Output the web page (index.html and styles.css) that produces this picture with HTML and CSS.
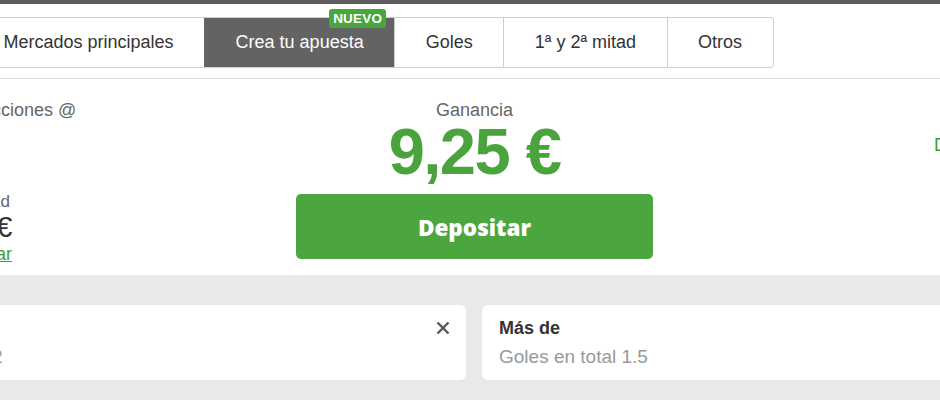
FILE: index.html
```html
<!DOCTYPE html>
<html lang="es">
<head>
<meta charset="utf-8">
<title>Crea tu apuesta</title>
<link rel="stylesheet" href="styles.css">
</head>
<body>
<div class="topbar"></div>
<nav class="tabs-wrap">
  <ul class="tabs">
    <li class="tab">Mercados principales</li>
    <li class="tab tab--active">Crea tu apuesta<span class="badge">NUEVO</span></li>
    <li class="tab">Goles</li>
    <li class="tab">1ª y 2ª mitad</li>
    <li class="tab">Otros</li>
  </ul>
</nav>
<section class="summary">
  <div class="summary__left">
    <div class="label">Selecciones @</div>
    <div class="label label--stake">Unidad</div>
    <div class="stake">10 €</div>
    <a class="link" href="#">Ajustar</a>
  </div>
  <div class="summary__center">
    <div class="label">Ganancia</div>
    <div class="payout">9,25 €</div>
    <button class="deposit" type="button">Depositar</button>
  </div>
  <div class="summary__right">
    <a class="details" href="#">Detalles</a>
  </div>
</section>
<section class="slips">
  <div class="slip">
    <div class="slip__head">
      <span class="slip__title">Real Madrid</span>
      <svg class="slip__close" width="14" height="14" viewBox="0 0 14 14" aria-hidden="true">
        <path d="M1.5 1.5 L12.5 12.5 M12.5 1.5 L1.5 12.5" stroke="#555" stroke-width="2.4" stroke-linecap="butt" fill="none"/>
      </svg>
    </div>
    <div class="slip__sub">Resultado del partido 1X2</div>
  </div>
  <div class="slip">
    <div class="slip__head">
      <span class="slip__title">Más de</span>
    </div>
    <div class="slip__sub">Goles en total 1.5</div>
  </div>
</section>
</body>
</html>
```
FILE: styles.css
```css
* { box-sizing: border-box; }
html, body { margin: 0; padding: 0; }
body {
  width: 940px;
  height: 400px;
  overflow: hidden;
  background: #e9e9e9;
  font-family: "Liberation Sans", Arial, Helvetica, sans-serif;
  color: #333;
}
.topbar { height: 4px; background: #5c5c5c; }

.tabs-wrap {
  background: #fff;
  padding: 13px 0 10px;
  border-bottom: 1px solid #dcdcdc;
}
.tabs {
  list-style: none;
  margin: 0 0 0 -28px;
  padding: 0;
  display: flex;
  width: max-content;
  border: 1px solid #cfcfcf;
  border-radius: 3px;
}
.tab {
  position: relative;
  height: 49px;
  padding: 0 30.5px;
  display: flex;
  align-items: center;
  font-size: 18px;
  color: #333;
  border-left: 1px solid #cfcfcf;
  white-space: nowrap;
}
.tab:first-child { border-left: 0; }
.tab--active {
  background: #636363;
  color: #fff;
  border-left-color: #636363;
}
.badge {
  position: absolute;
  top: -9px;
  right: 8px;
  background: #4aa63c;
  color: #fff;
  font-weight: bold;
  font-size: 13.5px;
  line-height: 19px;
  padding: 0 4px;
  border-radius: 3px;
  letter-spacing: 0.2px;
}

.summary {
  background: #fff;
  display: grid;
  grid-template-columns: 340px 357px 1fr;
  margin-left: -44px;
  padding: 21px 0 11px;
}
.label {
  font-size: 18px;
  line-height: 20px;
  color: #666;
  white-space: nowrap;
}
.summary__left { display: flex; flex-direction: column; align-items: flex-start; }
.label--stake {
  margin-top: 73px;
  font-size: 17px;
  line-height: 18px;
}
.stake {
  margin-top: 2px;
  font-size: 29px;
  line-height: 28px;
  color: #333;
  white-space: nowrap;
}
.link {
  margin-top: 4px;
  font-size: 18px;
  line-height: 18px;
  color: #3f9c35;
  text-decoration: underline;
}
.summary__center {
  display: flex;
  flex-direction: column;
  align-items: center;
}
.payout {
  font-size: 65px;
  line-height: 63px;
  font-weight: bold;
  color: #4aa33d;
  letter-spacing: -1.5px;
  white-space: nowrap;
}
.deposit {
  margin: 11px 0 5px;
  width: 357px;
  height: 65px;
  padding: 2px 0 0;
  border: 0;
  border-radius: 5px;
  background: #4ca63f;
  color: #fff;
  font-family: "Open Sans", "Liberation Sans", sans-serif;
  font-weight: 800;
  font-size: 22.5px;
  cursor: pointer;
}
.summary__right { padding: 35px 0 0 281px; }
.details {
  font-size: 18px;
  line-height: 20px;
  color: #3f9c35;
  text-decoration: none;
  white-space: nowrap;
}

.slips {
  display: grid;
  grid-template-columns: 699px 699px;
  gap: 16px;
  margin-left: -233px;
  padding-top: 30px;
}
.slip {
  background: #fff;
  border-radius: 6px;
  height: 75px;
  padding: 12px 16px 12px 17px;
}
.slip__head {
  display: flex;
  align-items: center;
  justify-content: space-between;
  height: 22px;
}
.slip__title {
  font-size: 18px;
  font-weight: bold;
  color: #333;
}
.slip__sub {
  margin-top: 7px;
  font-size: 19px;
  line-height: 22px;
  color: #999;
  white-space: nowrap;
}
```
